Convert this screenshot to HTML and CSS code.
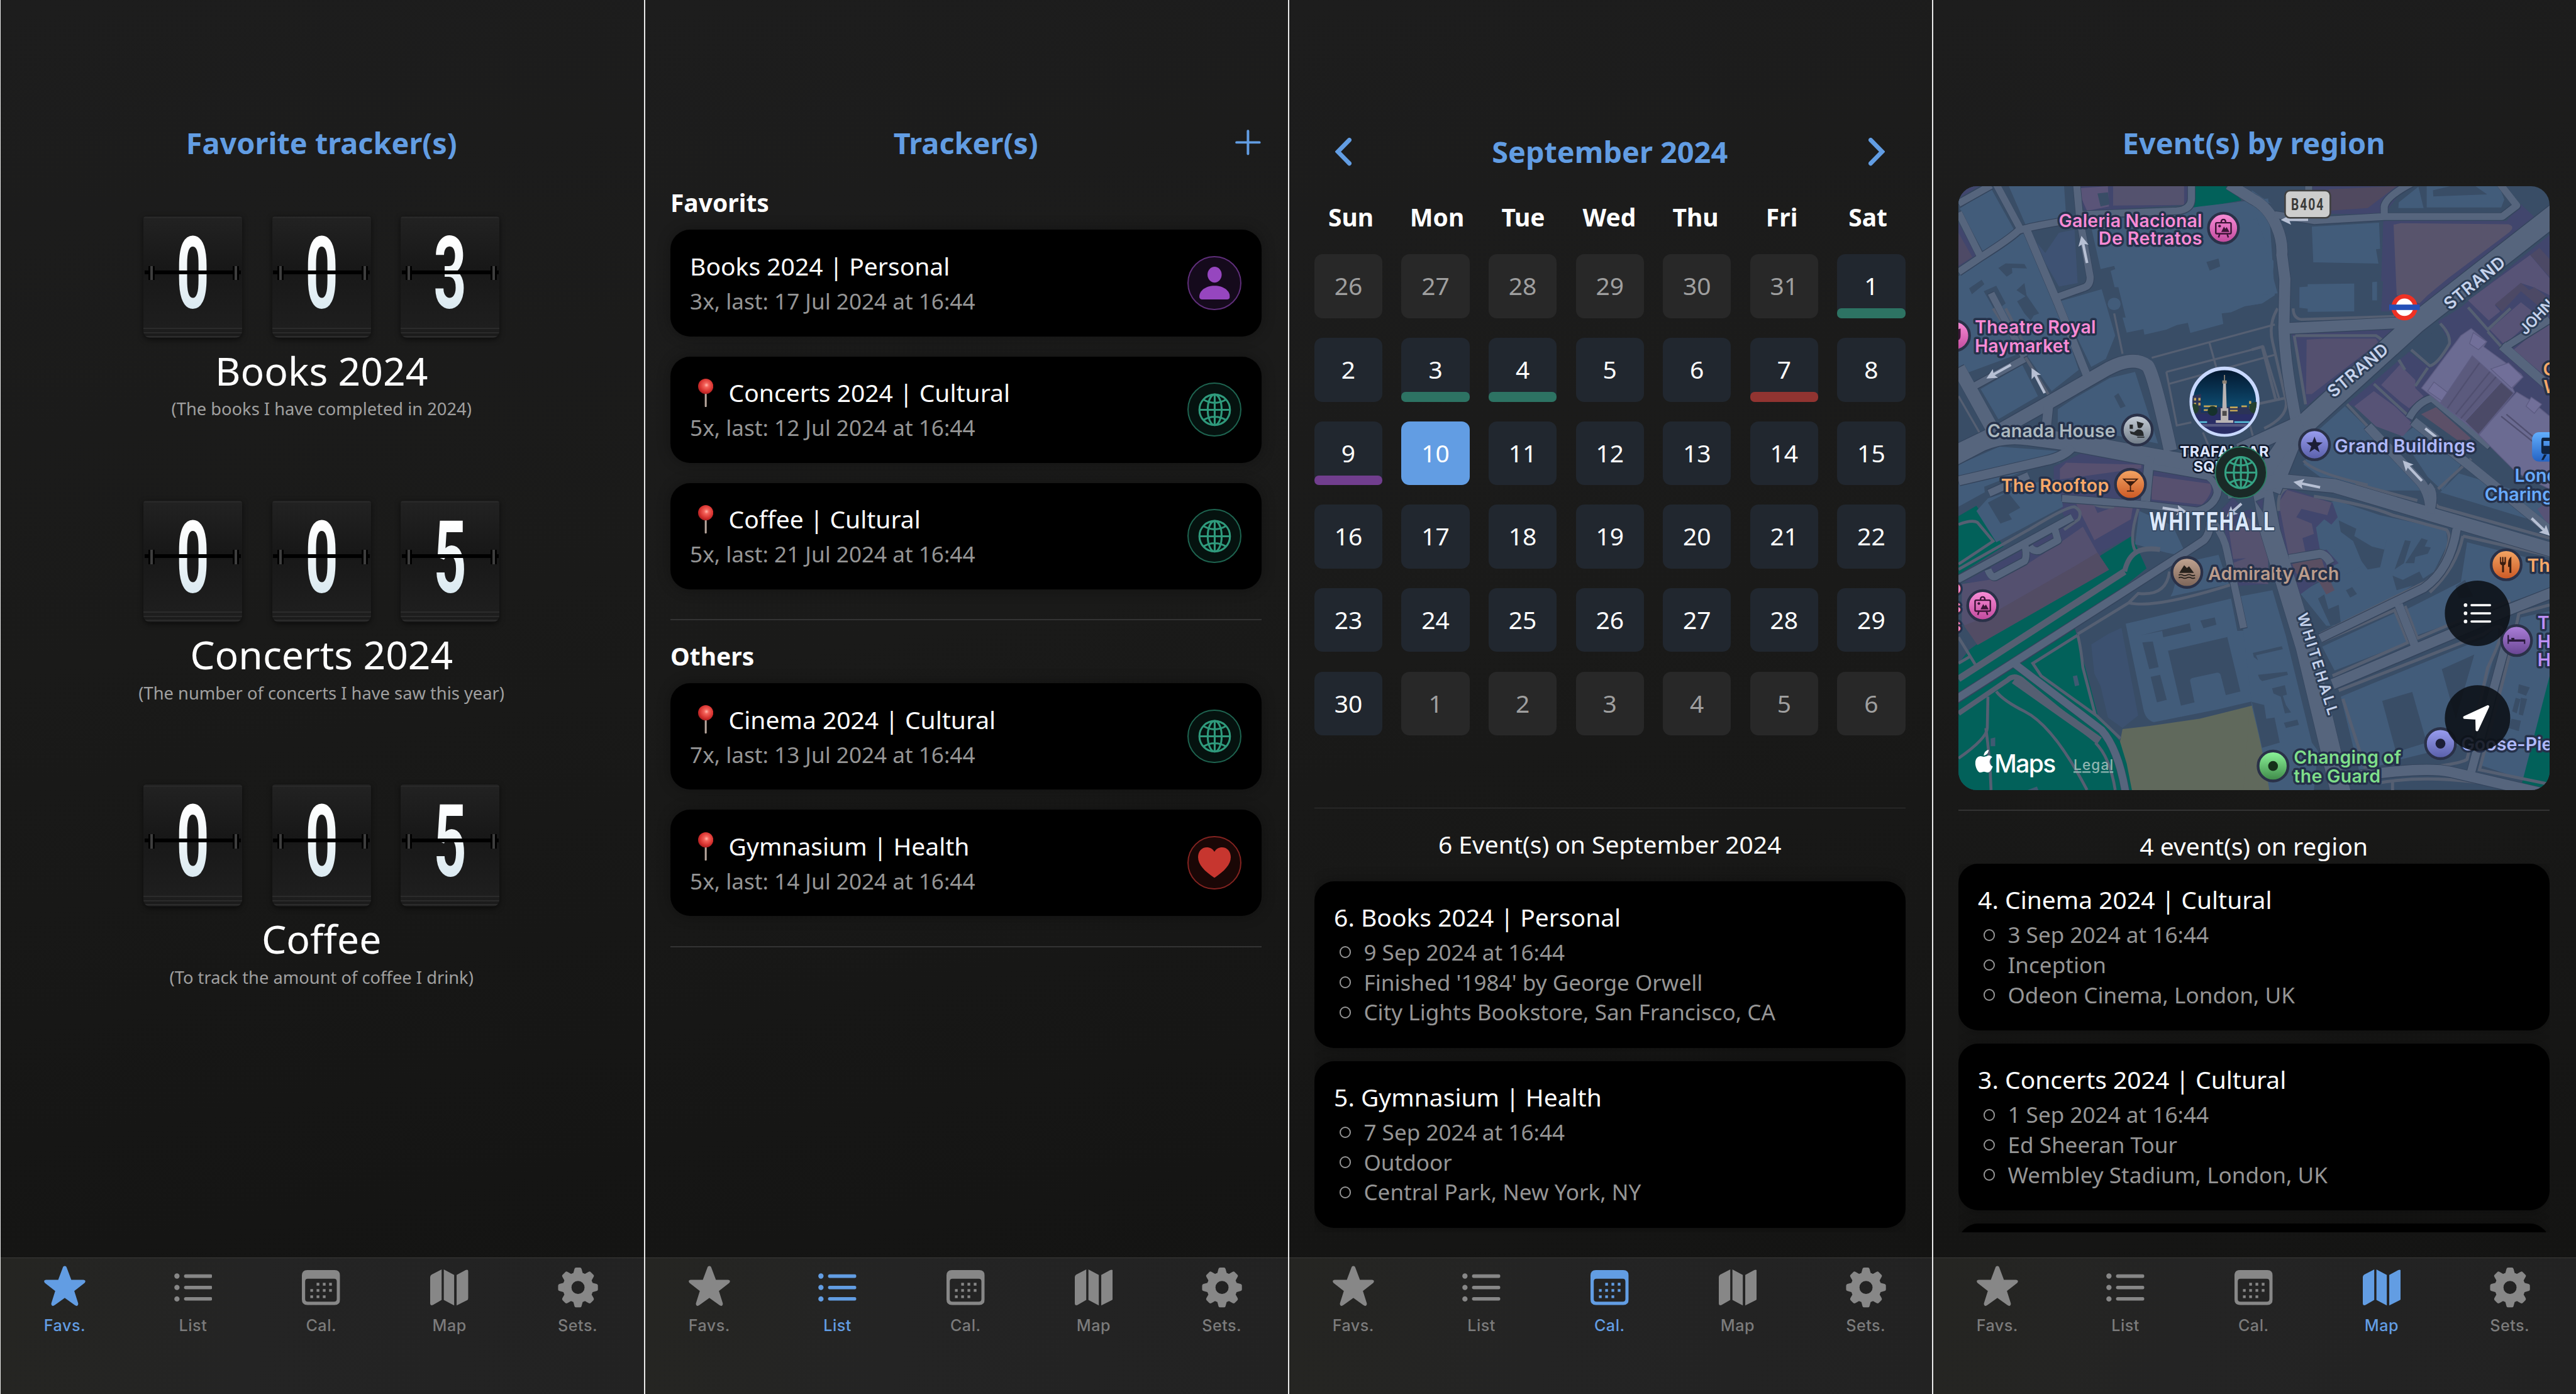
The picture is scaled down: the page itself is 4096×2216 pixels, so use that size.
FILE: index.html
```html
<!DOCTYPE html>
<html lang="en">
<head>
<meta charset="utf-8">
<title>Trackers</title>
<link rel="stylesheet" href="styles.css">
</head>
<body>
<svg class="sprite" aria-hidden="true">
  <defs>
    <radialGradient id="pinball" cx=".55" cy=".42" r=".6"><stop offset="0" stop-color="#ffb9ad"/><stop offset=".25" stop-color="#f4625a"/><stop offset=".7" stop-color="#d6322f"/><stop offset="1" stop-color="#a81d20"/></radialGradient>
    <linearGradient id="pinstem"><stop offset="0" stop-color="#6f625c"/><stop offset=".5" stop-color="#d3c3b8"/><stop offset="1" stop-color="#7d6c63"/></linearGradient>
  </defs>
  <symbol id="i-star" viewBox="0 0 76 74"><path d="M38 0c2 0 3 1 4 4l8 21.500h22c4 0 5 3 2 6L55.500 46l7 22c1 4-2 7-6 4L38 58.500 19.500 72c-4 3-7 0-6-4l7-22L2 31.500c-3-3-2-6 2-6h22L34 4c1-3 2-4 4-4z"/></symbol>
  <symbol id="i-list" viewBox="0 0 70 52"><circle cx="5" cy="5" r="4.800"/><circle cx="5" cy="26" r="4.800"/><circle cx="5" cy="47" r="4.800"/><rect x="18" y="2" width="52" height="6.400" rx="3.200"/><rect x="18" y="22.800" width="52" height="6.400" rx="3.200"/><rect x="18" y="43.600" width="52" height="6.400" rx="3.200"/></symbol>
  <symbol id="i-cal" viewBox="0 0 70 64"><path fill-rule="evenodd" d="M10 0h50q10 0 10 10v44q0 10-10 10H10Q0 64 0 54V10Q0 0 10 0zM11 16q-5 0-5 5v32q0 5 5 5h48q5 0 5-5V21q0-5-5-5z"/><path d="M27 23.500h5v5h-5zm11.500 0h5v5h-5zm11.500 0h5v5h-5zM15.500 35h5v5h-5zm11.500 0h5v5h-5zm11.500 0h5v5h-5zm11.500 0h5v5h-5zM15.500 46.500h5v5h-5zm11.500 0h5v5h-5zm11.500 0h5v5h-5z"/></symbol>
  <symbol id="i-map" viewBox="0 0 70 66"><path d="M0 14q0-3 2.500-4.500L21 0v56L5 65q-5 2-5-3zM25 0l19 10v56L25 56zM48.500 10L65 1q5-2 5 3v48q0 3-2.500 4.500L48.500 66z"/></symbol>
  <symbol id="i-gear" viewBox="-37 -37 74 74"><circle r="20" fill="none" stroke="currentColor" stroke-width="16"/><g id="teeth"><path id="t" d="M-9-25l2.500-9q.7-2.500 3-2.500h7q2.300 0 3 2.500l2.500 9z"/><use href="#t" transform="rotate(45)"/><use href="#t" transform="rotate(90)"/><use href="#t" transform="rotate(135)"/><use href="#t" transform="rotate(180)"/><use href="#t" transform="rotate(225)"/><use href="#t" transform="rotate(270)"/><use href="#t" transform="rotate(315)"/></g></symbol>
  <symbol id="i-globe" viewBox="-31 -31 62 62"><g fill="none" stroke="currentColor" stroke-width="3.600"><circle r="28.500"/><ellipse rx="13" ry="28.500"/><path d="M0-28.500v57M-28.500 0h57M-21-19Q0-7 21-19M-21 19Q0 7 21 19"/></g></symbol>
  <symbol id="i-person" viewBox="0 0 56 60"><ellipse cx="28" cy="14.500" rx="13" ry="14.500"/><path d="M6 60q-6 0-6-5C0 44 12 35 28 35s28 9 28 20q0 5-6 5z"/></symbol>
  <symbol id="i-heart" viewBox="0 0 60 56"><path d="M30 56C12 44 0 32 0 18 0 7 7 0 16 0c6 0 11 3 14 8 3-5 8-8 14-8 9 0 16 7 16 18 0 14-12 26-30 38z"/></symbol>
  <symbol id="i-pin" viewBox="0 0 28 52"><rect x="12" y="24" width="4" height="28" rx="1.500" fill="url(#pinstem)"/><circle cx="14" cy="14" r="14" fill="url(#pinball)"/></symbol>
  <symbol id="i-frame" viewBox="-16 -18 32 36"><g fill="none" stroke="#3c1537" stroke-width="2.800"><rect x="-14" y="-10" width="28" height="20" rx="2"/><path d="M-4-11q0-5 4-5t4 5M-7 11l-2 6M7 11l2 6"/></g><circle cx="-7" cy="-4" r="2.500" fill="#3c1537"/><path fill="#3c1537" d="M-4 7L1-3l2.500 4L6-2l5 9z"/></symbol>
</svg>

<main class="board">
  <section class="panel panel-first">
    <div class="content">
      <header class="bar"><h1>Favorite tracker(s)</h1></header>
      <div class="counters">
        <article class="counter">
          <div class="flips"><span class="flip"><b>0</b></span><span class="flip"><b>0</b></span><span class="flip"><b>3</b></span></div>
          <h2>Books 2024</h2><p>(The books I have completed in 2024)</p>
        </article>
        <article class="counter">
          <div class="flips"><span class="flip"><b>0</b></span><span class="flip"><b>0</b></span><span class="flip"><b>5</b></span></div>
          <h2>Concerts 2024</h2><p>(The number of concerts I have saw this year)</p>
        </article>
        <article class="counter">
          <div class="flips"><span class="flip"><b>0</b></span><span class="flip"><b>0</b></span><span class="flip"><b>5</b></span></div>
          <h2>Coffee</h2><p>(To track the amount of coffee I drink)</p>
        </article>
      </div>
    </div>
    <nav class="tabs">
      <a class="tab on"><svg class="ic star"><use href="#i-star"/></svg>Favs.</a>
      <a class="tab"><svg class="ic list"><use href="#i-list"/></svg>List</a>
      <a class="tab"><svg class="ic cal"><use href="#i-cal"/></svg>Cal.</a>
      <a class="tab"><svg class="ic map"><use href="#i-map"/></svg>Map</a>
      <a class="tab"><svg class="ic gear"><use href="#i-gear"/></svg>Sets.</a>
    </nav>
  </section>

  <section class="panel">
    <div class="content">
      <header class="bar"><h1>Tracker(s)</h1><svg class="plus" viewBox="0 0 47 47"><path d="M23.500 2.500v42M2.500 23.500h42"/></svg></header>
      <h3 class="group">Favorits</h3>
      <div class="cards">
        <article class="card"><div><h4>Books 2024 | Personal</h4><p>3x, last: 17 Jul 2024 at 16:44</p></div><span class="badge purple"><svg class="g-person"><use href="#i-person"/></svg></span></article>
        <article class="card"><div><h4><svg class="pin"><use href="#i-pin"/></svg>Concerts 2024 | Cultural</h4><p>5x, last: 12 Jul 2024 at 16:44</p></div><span class="badge green"><svg class="g-globe"><use href="#i-globe"/></svg></span></article>
        <article class="card"><div><h4><svg class="pin"><use href="#i-pin"/></svg>Coffee | Cultural</h4><p>5x, last: 21 Jul 2024 at 16:44</p></div><span class="badge green"><svg class="g-globe"><use href="#i-globe"/></svg></span></article>
      </div>
      <hr class="rule">
      <h3 class="group others">Others</h3>
      <div class="cards">
        <article class="card"><div><h4><svg class="pin"><use href="#i-pin"/></svg>Cinema 2024 | Cultural</h4><p>7x, last: 13 Jul 2024 at 16:44</p></div><span class="badge green"><svg class="g-globe"><use href="#i-globe"/></svg></span></article>
        <article class="card"><div><h4><svg class="pin"><use href="#i-pin"/></svg>Gymnasium | Health</h4><p>5x, last: 14 Jul 2024 at 16:44</p></div><span class="badge red"><svg class="g-heart"><use href="#i-heart"/></svg></span></article>
      </div>
      <hr class="rule">
    </div>
    <nav class="tabs">
      <a class="tab"><svg class="ic star"><use href="#i-star"/></svg>Favs.</a>
      <a class="tab on"><svg class="ic list"><use href="#i-list"/></svg>List</a>
      <a class="tab"><svg class="ic cal"><use href="#i-cal"/></svg>Cal.</a>
      <a class="tab"><svg class="ic map"><use href="#i-map"/></svg>Map</a>
      <a class="tab"><svg class="ic gear"><use href="#i-gear"/></svg>Sets.</a>
    </nav>
  </section>

  <section class="panel">
    <div class="content">
      <header class="bar month"><svg class="chev" viewBox="0 0 30 51"><path d="M26 4L5 25.500 26 47"/></svg><h1>September 2024</h1><svg class="chev" viewBox="0 0 30 51"><path d="M4 4l21 21.500L4 47"/></svg></header>
      <div class="week"><span>Sun</span><span>Mon</span><span>Tue</span><span>Wed</span><span>Thu</span><span>Fri</span><span>Sat</span></div>
      <div class="days">
        <span class="off">26</span><span class="off">27</span><span class="off">28</span><span class="off">29</span><span class="off">30</span><span class="off">31</span><span class="ev green">1</span>
        <span>2</span><span class="ev green">3</span><span class="ev green">4</span><span>5</span><span>6</span><span class="ev red">7</span><span>8</span>
        <span class="ev purple">9</span><span class="today">10</span><span>11</span><span>12</span><span>13</span><span>14</span><span>15</span>
        <span>16</span><span>17</span><span>18</span><span>19</span><span>20</span><span>21</span><span>22</span>
        <span>23</span><span>24</span><span>25</span><span>26</span><span>27</span><span>28</span><span>29</span>
        <span>30</span><span class="off">1</span><span class="off">2</span><span class="off">3</span><span class="off">4</span><span class="off">5</span><span class="off">6</span>
      </div>
      <hr class="rule month-rule">
      <h3 class="count">6 Event(s) on September 2024</h3>
      <div class="events spaced">
        <article class="event"><h4>6. Books 2024 | Personal</h4><ul><li>9 Sep 2024 at 16:44</li><li>Finished '1984' by George Orwell</li><li>City Lights Bookstore, San Francisco, CA</li></ul></article>
        <article class="event"><h4>5. Gymnasium | Health</h4><ul><li>7 Sep 2024 at 16:44</li><li>Outdoor</li><li>Central Park, New York, NY</li></ul></article>
      </div>
    </div>
    <nav class="tabs">
      <a class="tab"><svg class="ic star"><use href="#i-star"/></svg>Favs.</a>
      <a class="tab"><svg class="ic list"><use href="#i-list"/></svg>List</a>
      <a class="tab on"><svg class="ic cal"><use href="#i-cal"/></svg>Cal.</a>
      <a class="tab"><svg class="ic map"><use href="#i-map"/></svg>Map</a>
      <a class="tab"><svg class="ic gear"><use href="#i-gear"/></svg>Sets.</a>
    </nav>
  </section>

  <section class="panel">
    <div class="content">
      <header class="bar"><h1>Event(s) by region</h1></header>
      <svg class="mapview" viewBox="0 0 1084 1107" preserveAspectRatio="none">
        <defs>
          <linearGradient id="gPink" x2="0" y2="1"><stop offset="0" stop-color="#fb8fd8"/><stop offset="1" stop-color="#c0489c"/></linearGradient>
          <linearGradient id="gGrey" x2="0" y2="1"><stop offset="0" stop-color="#c9d1da"/><stop offset="1" stop-color="#6f7a86"/></linearGradient>
          <linearGradient id="gOrange" x2="0" y2="1"><stop offset="0" stop-color="#f5a765"/><stop offset="1" stop-color="#cb5723"/></linearGradient>
          <linearGradient id="gBrown" x2="0" y2="1"><stop offset="0" stop-color="#c3a592"/><stop offset="1" stop-color="#7b6357"/></linearGradient>
          <linearGradient id="gGreen" x2="0" y2="1"><stop offset="0" stop-color="#8ef79b"/><stop offset="1" stop-color="#3d8747"/></linearGradient>
          <linearGradient id="gBlue" x2="0" y2="1"><stop offset="0" stop-color="#9b9ff2"/><stop offset="1" stop-color="#585ea8"/></linearGradient>
          <linearGradient id="gViolet" x2="0" y2="1"><stop offset="0" stop-color="#ad80db"/><stop offset="1" stop-color="#664490"/></linearGradient>
          <linearGradient id="gTrain" x2="0" y2="1"><stop offset="0" stop-color="#62aefd"/><stop offset="1" stop-color="#2463c4"/></linearGradient>
          <linearGradient id="gNight" x2="0" y2="1"><stop offset="0" stop-color="#02152c"/><stop offset=".55" stop-color="#0d486c"/><stop offset=".75" stop-color="#1c2158"/><stop offset="1" stop-color="#1d2a66"/></linearGradient>
          <marker id="head" viewBox="0 0 20 20" refX="6" refY="10" markerWidth="50" markerHeight="50" markerUnits="userSpaceOnUse" orient="auto"><path d="M0 0l20 10L0 20l4-10z" fill="#b7c0d4"/></marker>
          <clipPath id="medal"><circle cx="488" cy="395" r="59"/></clipPath>
          <g id="walks" fill="none">
            <g transform="matrix(.3827 0 0 .3699 -32 -22)">
              <path stroke-width="10" d="M1010 910L1600 745M1080 980L1545 855L1620 1110M1080 980L1130 1245L1200 1230M1090 1040L1600 895M1285 830L1320 960M1255 1280l25 60M1480 1240l20 80M830 690l40 200M84 1100L190 1290"/>
              <path stroke-width="14" d="M160 1040L400 900L520 1100M250 665l150 240M555 665l135 320M310 665l100 200"/>
            </g>
            <g transform="matrix(.3796 0 0 .3699 538 -22)">
              <path stroke-width="14" d="M200 665Q200 715 240 720L690 705M125 665Q80 740 100 830L165 1120Q180 1200 60 1260M0 870l50-15 65 260M0 1145l160-35M210 800H600Q650 830 640 860M205 800L260 1140M770 870L860 950Q900 940 955 840Q960 790 910 740M1045 660L1140 770L1250 665M710 920l30 50M590 1040L760 1200M850 960l-60 90M460 1140L560 1250M250 1420Q300 1480 560 1540M1140 780l70 80M1060 1410l-160 150"/>
            </g>
            <g transform="matrix(.3827 0 0 .3827 -32 538)">
              <path stroke-width="32" d="M84 955L880 440"/>
              <path stroke-width="24" d="M880 440Q895 370 940 345Q980 325 1050 335M84 1120L320 960Q350 930 390 960L750 1255"/>
              <path stroke-width="14" d="M84 215Q150 190 175 205L250 295L84 405M84 430L420 240Q600 130 640 130Q680 150 660 190L590 240M84 1335Q220 1240 222 1190L225 1040M215 1190Q235 1330 240 1487M265 1015Q300 1060 400 1110Q540 1180 700 1487M740 1260Q810 1330 835 1487M655 745L440 880L480 940L745 1130L860 1240M655 745Q670 800 680 900L740 1130M655 740L900 590Q1020 620 1385 505M900 590L945 545Q1080 560 1095 440M84 880l60-35M84 755l80 130M945 140Q900 280 930 340M700 90Q740 140 830 130"/>
              <path stroke-width="36" d="M350 960L760 1250"/>
            </g>
            <g transform="matrix(.3796 0 0 .3827 538 538)">
              <path stroke-width="15" d="M170 40Q120 60 130 150M300 80Q560 120 680 170L940 240Q960 260 950 310Q920 430 840 490L330 740M340 775L690 625L755 780L390 940M740 605L800 760Q1180 600 1250 580M1020 270L1439 365M1020 270Q990 420 860 540M420 1010L1120 740Q1200 680 1210 720Q1200 780 1140 900L1040 1340Q1000 1370 640 1400M440 1050L560 1420M1439 600L1290 640Q1260 800 1100 1390L1439 1460M880 40Q860 100 900 130L1439 280M500 20L800 100M680 1440V1487M600 1455Q900 1400 1300 1487"/>
            </g>
          </g>
          <g id="roads" fill="none" stroke-linejoin="round">
            <g transform="matrix(.3827 0 0 .3699 -32 -22)">
              <path stroke-width="34" d="M84 145L240 55M84 190L190 410M265 50L385 280M84 485L200 405Q330 320 370 280Q400 265 570 235M240 590L400 905M160 1050L400 915"/>
              <path stroke-width="34" d="M650 50L665 220L715 510Q715 550 690 560L550 612M680 200L1130 182Q1200 175 1200 120V50"/>
              <path stroke-width="38" d="M412 280L560 640L700 1000"/>
              <path stroke-width="64" d="M84 960L250 1270M60 1380L280 1270L520 1130L790 970Q920 895 990 950Q1020 990 1100 1370"/>
              <path stroke-width="88" d="M60 1400L190 1330Q300 1280 420 1300L640 1330L1000 1400L1400 1470"/>
              <path stroke-width="45" d="M515 1150L500 1300M84 1520L500 1420Q590 1400 630 1350M1000 1400L980 1620"/>
              <path stroke-width="30" d="M1010 1450L1280 1500Q1330 1540 1320 1600"/>
            </g>
            <g transform="matrix(.3796 0 0 .3699 538 -22)">
              <path stroke-width="54" d="M-110 50L0 120Q80 160 120 260Q150 330 145 400L160 520L155 760Q160 950 220 1250M150 765L740 735"/>
              <path stroke-width="100" d="M1500 170L790 740L200 1290L90 1568"/>
              <path stroke-width="72" d="M240 1230L-60 1370M200 1270L60 1480"/>
              <path stroke-width="34" d="M110 200L300 230L640 210H1210L1280 155L1200 50M640 210V160Q650 110 770 45M1439 720L1220 860M760 1210Q800 1130 870 1110L1150 1350M275 50V80"/>
              <path stroke-width="46" d="M1210 850L1500 1110M780 1225L1060 1450L1480 1800M560 1250L800 1510Q870 1580 860 1700"/>
            </g>
            <g transform="matrix(.3827 0 0 .3827 -32 538)">
              <path stroke-width="36" d="M60 1060L740 625L1200 330L1260 290Q1290 260 1290 200M350 880L770 1200Q850 1290 885 1500"/>
              <path stroke-width="34" d="M60 490L630 180M225 430Q240 470 260 465L400 390Q415 370 400 300M425 320Q440 345 470 340L560 290L545 235M1310 210Q1360 280 1370 340L1450 710M230 65L420 -20M580 90L980 120L1230 150Q1340 120 1330 0"/>
            </g>
            <g transform="matrix(.3796 0 0 .3827 538 538)">
              <path stroke-width="96" d="M50 40L90 250L260 800L430 1500"/>
              <path stroke-width="66" d="M-120 60L130 5L400 30L860 165L1480 345"/>
              <path stroke-width="40" d="M990 235Q960 430 830 520L330 760M710 600L790 800M860 160Q890 60 850 30M1240 740L1060 1400M180 380L330 355Q360 360 380 400"/>
              <path stroke-width="50" d="M390 980L820 800L1250 620L1480 530M440 1430Q830 1370 960 1400L1480 1520"/>
            </g>
          </g>
        </defs>

        <rect width="1084" height="1107" fill="#394d66"/>
        <g transform="matrix(.3827 0 0 .3699 -32 -22)">
          <g fill="#41466d"><path d="M84 59H185L84 120zM84 240L175 410L84 465zM640 59H1190V150L690 185zM540 1450L700 1370L1000 1420L990 1600H540zM1020 1470L1260 1500L1300 1600H1000z"/></g>
          <path fill="#4e4a66" d="M84 290L150 410L84 455z"/>
          <path fill="#5a5478" d="M652 70L800 59L805 160L700 182z"/><path fill="#54526e" d="M825 59H1165V152L825 155z"/><path fill="#57506f" d="M570 1460L600 1430L960 1440V1600H570z"/>
          <path fill="#02615a" d="M1215 59H1380L1440 130L1208 172z"/>
          <g fill="#425c7a"><path d="M90 170L240 70L350 275L205 390zM325 59H590L600 210L405 250zM84 505L395 290L545 620L660 970L530 1075L400 880L84 1000zM570 630L770 570L835 800L790 915L720 955zM190 1065L390 945L465 1100L275 1215zM560 1165L640 1110L810 1010L930 980L1040 1335L560 1240zM84 1440L280 1350L600 1375L570 1430L400 1470L84 1600z"/>
          <path d="M715 240L1240 160L1568 120L1600 600L1540 640L1455 655L1390 685L1345 690L1353 742L1195 787L1183 737L1130 748L1080 770L975 795L970 768L890 785L870 710H885L850 560H832L813 480L835 470L830 455L765 470z"/></g>
          <path fill="#3e5273" d="M460 340L500 390L565 290L640 275L655 540L565 557L500 440z"/>
          <circle cx="830" cy="643" r="31" fill="#425c7a"/>
          <g fill="#394d66"><path d="M1272 435L1330 418L1338 457L1288 478zM135 565L195 523L208 545L148 595zM275 465L310 442L400 445L412 467L340 465L342 490L315 508zM362 575L400 540L410 600L470 690L445 700L430 725L400 690L365 630L405 605zM205 580L265 553L310 640L260 680zM750 95L800 90L808 150L765 160z"/><path d="M830 1100L850 1085L885 1150L860 1160z"/></g>
        </g>
        <g transform="matrix(.3796 0 0 .3699 538 -22)">
          <g fill="#41466d"><path d="M260 59H740L640 200L260 195zM635 232H1230L1300 150L1390 235L800 680H625L640 415H680V530H625zM190 780L700 770L265 1150zM1010 660L1439 300V1568L1100 1300L870 1110L760 1230L460 1140L760 880L860 960L960 840L900 730z"/></g>
          <g fill="#425c7a"><path d="M0 80L100 150L0 100zM710 140L805 62L830 168H708zM845 59H1195L1220 125L1205 165H845zM290 260L615 240L620 370L600 372L612 443L297 437zM230 560L270 557V545L495 542V680L270 682V667L230 662zM582 535L605 533V625H582z"/><path d="M-10 230L25 220L45 280L75 360L70 395L105 430V460L100 500L125 590L50 600V640L-10 650z"/><path d="M320 1270L450 1150L560 1260L840 1568H420L250 1440z"/><path d="M800 1240L1010 1440L920 1568L850 1500L720 1300z"/></g>
          <path fill="#394d66" d="M875 80L960 59H1080L1137 100L877 110zM780 870L910 750L955 830L860 945z"/>
          <g fill="#58546c"><path d="M685 250L720 243L1240 248Q1280 260 1235 295L1060 430L950 515L850 600L810 640L700 600z"/><path fill="#50495f" d="M370 75L700 59L560 168L380 180z"/><path fill="#54506f" d="M265 820L350 815H600L612 835L290 1090H262z"/></g>
          <g fill="#575376"><path d="M1045 625L1345 400L1439 515V600L1360 560L1300 540L1175 650L1200 680L1145 725zM1150 770L1300 635L1380 700L1220 845zM1265 870L1439 720V1020zM625 1045L715 945L790 1020V1060L830 1100L760 1160L720 1130zM495 1150L590 1075L690 1150L780 1240L730 1300L600 1250z"/></g>
          <path fill="#4c4965" d="M1175 645L1300 538L1340 575L1365 560L1439 620V700L1300 580L1210 680zM1345 400L1390 365L1439 420V510z"/>
          <path fill="#5c5068" d="M818 1190L890 1155L1060 1310L1010 1330z"/>
        </g>
        <g transform="matrix(.3827 0 0 .3827 -32 538)">
          <path fill="#41466d" d="M560 0L1000 -60L985 60L915 270L740 360L800 430L700 440L600 200L540 60zM110 490L640 200L700 240L770 360L700 400L220 500zM1350 180L1490 140L1568 380V500L1400 510zM1000 -20H1310L1320 70L1260 150L990 110z"/>
          <path fill="#02615a" d="M84 175L170 125L300 320L84 455zM135 815L770 360L915 270L985 425L640 705L755 1140L900 1300L920 1487H84V880z"/>
          <path fill="#394d66" d="M84 680L135 815L84 880z"/>
          <g fill="#425c7a"><path d="M170 150L225 90L500 0H560L585 130L265 300zM84 0L200 -40L210 60L84 130zM950 150L1110 220L1180 370L1080 350L930 310zM1110 540L1150 400L1330 360L1350 420L1380 500L1100 560zM885 690L950 675L1390 570L1420 725L1520 720L1568 800V900L1520 940L1568 960V1050L1500 1060L1330 1100L1020 1162Q980 1150 970 1100z"/></g>
          <path fill="#3c5170" d="M720 790L800 740L865 710L945 1130L870 1190L800 1140L765 990L735 930z"/>
          <path fill="#02615a" d="M430 900L655 760L740 1120L600 1030zM84 880L145 850L160 890L84 940z"/>
          <path fill="#57506f" d="M640 100L720 90L750 160L830 130L930 60L910 190L735 290zM1005 -20L1290 20Q1310 60 1250 120L1010 95z"/>
          <path fill="#54506f" d="M100 500L230 480L420 400L560 310L680 225L750 350L805 432L175 792L100 680z"/>
          <path fill="#524c64" d="M230 650L640 415L750 350L805 432L175 792L110 700z"/>
          <path fill="#55526f" d="M1380 240L1470 180L1568 260V370L1400 380zM1395 400L1568 340V500L1420 490z"/>
          <g fill="#394d66"><path d="M225 110L320 60L380 135L325 165L340 190L285 210zM960 745L1060 725L1065 755L1200 725L1192 688L1060 720zM965 780L1015 775L1043 898L998 908zM1005 945L1050 935L1082 1055L1035 1067zM1243 675L1312 660L1320 695L1258 712zM1088 820L1372 754L1435 1015L1365 1032L1340 935Q1335 922 1320 925L1205 950Q1190 955 1195 970L1215 1067L1150 1083z"/></g>
          <path fill="#60695c" d="M870 1195L1000 1180L1240 1145L1490 1083L1515 1180L1545 1310L1600 1400V1487H915L890 1360L858 1255z"/>
          <path fill="#3f5a72" d="M238 1240L260 1235V1277H238zM632 942L652 937L663 985L642 990zM415 1487L460 1470L467 1487z"/>
        </g>
        <g transform="matrix(.3796 0 0 .3827 538 538)">
          <path fill="#425c7a" d="M-60 560L100 530L165 750L290 1260L320 1300L300 1487H80L0 1080z"/>
          <path fill="#394d66" d="M5 830L145 798L150 812L20 842L30 865L10 850zM30 935L170 920L175 935L50 965L38 955zM98 1000L160 985L170 1030L150 1035L165 1080L190 1115L160 1120L140 1040L105 1025zM155 1165L220 1150L228 1175L165 1190zM0 1065L60 1080L70 1145L110 1140L135 1260L50 1285z"/>
          <path fill="#60695c" d="M-10 1090L0 1090Q45 1250 85 1487H-40z"/>
          <path fill="#425c7a" d="M370 110L410 100L620 170L940 240L945 310L880 440L720 545L440 700L360 700L230 540L330 490L250 300z"/>
          <path fill="#41466d" d="M130 90L170 40L390 110L415 180L320 290L420 400L380 420L330 480L220 560L130 200z"/>
          <path fill="#55526f" d="M130 110L170 50L385 110L365 170L240 140L215 180L290 210L300 260L245 280L260 350L180 370z"/>
          <path fill="#5a4f62" d="M195 405L335 370L350 420L400 530L360 550L325 490L215 450z"/>
          <path fill="#425c7a" d="M310 230L350 190L500 300L540 410L440 460L400 330L330 340z"/>
          <g fill="#394d66"><path d="M420 195L505 235L495 270L580 320L640 335L655 275L620 420L560 430L530 390L490 295L430 250zM740 290L768 295L735 400L690 430zM820 280L850 290L835 320L865 325L850 355L790 370L785 400L742 400zM455 530L485 515L508 548L475 565zM320 570L350 550L370 620L420 600L430 690L380 700zM680 460L730 480L810 440L835 490L700 530z"/></g>
          <g fill="#425c7a"><path d="M340 800L690 640L750 780L400 915zM750 620L1010 490L1040 300L1439 400V520L800 745zM910 60L1439 220V100L1000 -30zM430 1040L600 970L1120 760L1190 700L1190 780L1050 1260L700 1345L520 1400zM1300 660L1439 630V960L1320 1440L1110 1370z"/></g>
          <g fill="#394d66"><path d="M630 1060L775 1017L845 1260L697 1305zM918 908L1075 838L985 1145zM1290 980L1343 995L1325 1035L1285 1020zM1275 1045L1298 1052L1280 1120L1258 1110zM1300 1045L1330 1050L1310 1130L1290 1125zM1255 1145L1300 1155L1290 1205L1240 1190zM985 510L1030 480L1070 560L1000 570z"/></g>
          <path fill="#575376" d="M1380 140L1439 100V230z"/>
          <path fill="#02615a" d="M1439 940V1487L1305 1455z"/>
        </g>

        <use href="#walks" stroke="#555f72"/>
        <use href="#roads" stroke="#34445c" transform="translate(-1 -1)"/>
        <use href="#roads" stroke="#34445c" transform="translate(1 1.500)"/>
        <use href="#roads" stroke="#56657d"/>
        <g transform="matrix(.3796 0 0 .3699 538 -22)" stroke="#5d5c82" stroke-width="4"><path fill="#6b6b92" d="M1060 765L1135 830L1120 855L1300 990L1310 1005L1260 1060L1270 1080L1100 1290L820 1060L1010 800zM1280 1080L1345 1120L1439 1200V1560L1280 1480L1095 1290z"/><path fill="#716f99" d="M1070 785L1135 830L1095 870L1052 840zM880 1030L950 1085L920 1125L850 1075zM1240 935L1310 1005L1255 1060L1155 965zM1350 1105L1400 1140L1365 1185L1325 1150z"/><path fill="#5b5a7d" d="M1065 900L1205 1030L1030 1225L910 1135z"/><path fill="#4b4a67" d="M1205 1030L1265 1085L1095 1290L1030 1225z"/><path fill="none" stroke="#504f70" stroke-width="7" d="M1100 935L945 1160M1150 980L985 1190M1180 1005L1010 1210M1205 1200L1400 1360M1230 1190L1439 1370"/></g>
        <path fill="#41466d" stroke="#3a4a66" stroke-width="2" d="M482 592l22-22 14 16-24 20zM546 578l14-6-2 24z"/>

        <g stroke="#b7c0d4" stroke-width="13">
          <g transform="matrix(.3827 0 0 .3699 -32 -22)"><path marker-end="url(#head)" d="M700 440L680 340"/><path marker-end="url(#head)" d="M335 945L248 995"/><path marker-end="url(#head)" d="M497 1085L450 992"/></g>
          <g transform="matrix(.3796 0 0 .3699 538 -22)"><path marker-end="url(#head)" d="M272 225L175 226"/><path d="M838 1260L890 1302"/><path marker-end="url(#head)" d="M822 1520L753 1445"/><path marker-end="url(#head)" d="M330 1552L235 1532"/></g>
          <g transform="matrix(.3827 0 0 .3827 -32 538)"><path marker-end="url(#head)" d="M1062 135L1145 149"/><path marker-end="url(#head)" d="M1440 115L1395 155"/></g>
          <g transform="matrix(.3796 0 0 .3827 538 538)"><path marker-end="url(#head)" d="M1352 185L1415 245"/></g>
        </g>

        <g class="poi">
          <circle cx="486" cy="77" r="27.500" fill="url(#gPink)"/><use href="#i-frame" x="470" y="59" width="32" height="36"/>
          <circle cx="-7" cy="274" r="27.500" fill="url(#gPink)"/><path d="M0 262l4-1v12q0 8-4 9z" fill="#3c1537"/>
          <circle cx="328" cy="447" r="27.500" fill="url(#gGrey)"/><path fill="#26292b" d="M314 437h6v8h-6zM327 431l13 4-3 6q-2 4-8 2zM328 446q12-2 12 12h-12l-12-4-2-5 8 2zM328 459h13v2h-13z"/>
          <circle cx="315.500" cy="546.500" r="27.500" fill="url(#gOrange)"/><path fill="none" stroke="#3b1c0f" stroke-width="2" d="M303 537h25l-12.500 12zM315.500 549v9M309 559h13"/><path fill="#3b1c0f" d="M307 541h17l-8.500 8z"/>
          <circle cx="419" cy="708" r="27.500" fill="url(#gBrown)"/><path fill="#26201b" d="M405 709l9-14 5 5 4-3 9 12z"/><path fill="none" stroke="#26201b" stroke-width="2" d="M404 713q4-2 7.500 0t7.500 0 7.500 0 7.500 0M404 718q4-2 7.500 0t7.500 0 7.500 0 7.500 0"/>
          <circle cx="44.500" cy="769" r="27.500" fill="url(#gPink)"/><use href="#i-frame" x="28.500" y="751" width="32" height="36"/>
          <circle cx="577" cy="1063" r="27.500" fill="url(#gGreen)"/><circle class="dot" cx="577" cy="1063" r="9" fill="#15301a"/>
          <circle cx="653" cy="474" r="27.500" fill="url(#gBlue)"/><path fill="#1c1e37" d="M653 459l4 10.500 11 .5-9 7 3.300 11-9.300-6.500-9.300 6.500 3.300-11-9-7 11-.5z"/>
          <circle cx="1004.500" cy="694" r="27.500" fill="url(#gOrange)"/><path fill="#3b1c0f" d="M993 680h2v9h2v-9h2.500v9h2v-9h2.500v10q0 4-3.500 5v13h-3.500v-13q-4-1-4-5zM1014 679v30h-3.500v-11h-2.500q-1-15 6-19z"/>
          <circle cx="884" cy="1022" r="27.500" fill="url(#gBlue)"/><circle class="dot" cx="884" cy="1022" r="9" fill="#1c1e37"/>
          <circle cx="1023.500" cy="833" r="27.500" fill="url(#gViolet)"/><path fill="#291a3c" d="M1007 823h2.500v8h5l-1-3h6v3h20v8h-2.500v-4h-27.500v4h-2.500z"/>
          <rect x="1052" y="451" width="60" height="54" rx="13" fill="url(#gTrain)"/><path fill="#0f2340" fill-rule="evenodd" d="M1072 461h30v30h-28q-5 0-5-5v-19q0-6 3-6zM1073 467v9h30v-9zM1074 492h5l-6 10h-4z"/>
        </g>

        <g class="label">
          <g fill="#fa8bd6"><text x="184" y="75" textLength="263">Galeria Nacional</text><text x="257" y="107.500" textLength="190">De Retratos</text><text x="30" y="270" textLength="222">Theatre Royal</text><text x="30" y="304" textLength="174">Haymarket</text><text x="5" y="747" text-anchor="end">o</text><text x="5" y="782" text-anchor="end">s</text><text x="5" y="817" text-anchor="end">s</text></g>
          <text x="53" y="460" textLength="235" fill="#aebac0">Canada House</text>
          <g fill="#f8a868"><text x="78" y="560" textLength="198">The Rooftop</text><text x="1072" y="347">C</text><text x="1073" y="380">W</text><text x="1043" y="706.500">Th</text></g>
          <text x="458" y="721.500" textLength="240" fill="#bb9c8b">Admiralty Arch</text>
          <g fill="#7fdf8a"><text x="615" y="1058.500" textLength="197">Changing of</text><text x="615" y="1093.500" textLength="159">the Guard</text></g>
          <g fill="#b0b9fb"><text x="690" y="487.500" textLength="258">Grand Buildings</text><text x="922" y="1034.500">Goose-Pie</text></g>
          <g fill="#68abff"><text x="1020" y="542">Lond</text><text x="965" y="577">Charing</text></g>
          <g fill="#bd8ff5"><text x="1062" y="811.500">T</text><text x="1062" y="846">H</text><text x="1062" y="880.500">H</text></g>
        </g>
        <g class="street">
          <text transform="translate(688 389) rotate(-40)" textLength="134">STRAND</text>
          <text transform="translate(901 228) rotate(-39)" textLength="134">STRAND</text>
          <text transform="translate(1040 274) rotate(-46)" font-size="27">JOHN</text>
          <text transform="translate(621 786) rotate(72.700)" textLength="194" font-size="27">WHITEHALL</text>
        </g>
        <g class="place"><text x="406" y="496.500" textLength="163">TRAFALGAR</text><text x="431" y="524" textLength="114">SQUARE</text></g>
        <text class="district" transform="translate(350 631) scale(.8 1)" textLength="287">WHITEHALL</text>

        <rect x="599" y="8" width="83" height="50" rx="9" fill="#cdcdcd" stroke="#404040" stroke-width="3"/>
        <text class="shield" transform="translate(610 43.500) scale(.74 1)" textLength="80">B404</text>
        <circle cx="818" cy="222" r="20" fill="#fff" stroke="#ee3124" stroke-width="8"/><rect x="790" y="217" width="56" height="10" fill="#2450b8"/>

        <circle cx="488" cy="395" r="61" fill="url(#gNight)" stroke="#c8d8ff" stroke-width="6.500"/>
        <g clip-path="url(#medal)">
          <path fill="#2b3357" d="M425 385l20-4v34h30v-10h60v-6l20-6v50H425z"/>
          <path fill="#c2a557" d="M432 388h4v5h-4zm8 0h4v5h-4zm-8 9h4v5h-4zm8 0h4v5h-4zM450 402h24v3h-24zm0 7h24v3h-24zM498 404h14v3h-14zm0 6h14v3h-14zM519 402h10v3h-10zM533 394h4v5h-4zm0 9h4v5h-4z"/>
          <path fill="#2a2e66" d="M425 418h130v40H425z"/><path fill="#59c5df" d="M430 431h26v3h-26zM506 431h40v3h-40z"/><path fill="#565a83" d="M425 436h130v5H425z"/>
          <circle cx="466" cy="412" r="9" fill="#16312d"/><circle cx="432" cy="408" r="9" fill="#23402f"/><circle cx="543" cy="406" r="10" fill="#23402f"/>
          <path fill="#b9b4b4" d="M485.500 361h5l1.500 46h-8zM481 407h14v22h-14zM472 429h32v5h-32z"/><path fill="#8f8375" d="M484 356h8v6h-8zM487 346h2v10h-2z"/><path fill="#4c4a4c" d="M484 412h8v9h-8z"/>
        </g>
        <circle cx="518" cy="525" r="47" fill="#1a2a27" stroke="#2b8065" stroke-width="2"/><use href="#i-globe" x="487" y="494" width="62" height="62" color="#35a384"/>

        <g fill="#fff"><path d="M47 1046c4 0 7-3 10-2 2 0 4 1 5 3-7 4-6 14 1 17-2 6-6 11-9 11s-4-1.500-7-1.500-4 1.500-7 1.500c-4 0-9-9-9-17 0-9 5-13 10-13 2 0 4 1.500 6 1zM46.500 1044c0-5 4-10 9-10.500 0 5-4 10-9 10.500z"/><text class="brand" x="66" y="1074.500" textLength="113">Maps</text></g>
        <text class="legal" x="211" y="1070.500" textLength="73">Legal</text>

        <g class="mapbtn"><circle cx="952" cy="783" r="60"/><circle cx="952" cy="975" r="60"/></g>
        <g fill="#fff" transform="translate(926 765)"><circle cx="4" cy="3" r="3.300"/><circle cx="4" cy="18" r="3.300"/><circle cx="4" cy="33" r="3.300"/><rect x="13" y="1" width="38" height="4" rx="2"/><rect x="13" y="16" width="38" height="4" rx="2"/><rect x="13" y="31" width="38" height="4" rx="2"/></g>
        <path fill="#fff" stroke="#fff" stroke-width="5" stroke-linejoin="round" d="M971 954l-43 20 22.500 1.500L951 997z"/>
      </svg>
      <hr class="rule map-rule">
      <h3 class="count">4 event(s) on region</h3>
      <div class="events">
        <article class="event"><h4>4. Cinema 2024 | Cultural</h4><ul><li>3 Sep 2024 at 16:44</li><li>Inception</li><li>Odeon Cinema, London, UK</li></ul></article>
        <article class="event"><h4>3. Concerts 2024 | Cultural</h4><ul><li>1 Sep 2024 at 16:44</li><li>Ed Sheeran Tour</li><li>Wembley Stadium, London, UK</li></ul></article>
        <article class="event"></article>
      </div>
    </div>
    <nav class="tabs">
      <a class="tab"><svg class="ic star"><use href="#i-star"/></svg>Favs.</a>
      <a class="tab"><svg class="ic list"><use href="#i-list"/></svg>List</a>
      <a class="tab"><svg class="ic cal"><use href="#i-cal"/></svg>Cal.</a>
      <a class="tab on"><svg class="ic map"><use href="#i-map"/></svg>Map</a>
      <a class="tab"><svg class="ic gear"><use href="#i-gear"/></svg>Sets.</a>
    </nav>
  </section>
</main>
</body>
</html>
```
FILE: styles.css
```css
/* 1rem = 10 design pixels */
html { font-size: 8.6706px; }
* { box-sizing: border-box; margin: 0; padding: 0; }
body { background: #1a1a1a; color: #fff; font-family: "Noto Sans", sans-serif; overflow: hidden; }
.sprite { position: absolute; width: 0; height: 0; }

.board { display: grid; grid-template-columns: repeat(4, 1fr); width: 100vw; height: 100vh; }
.panel { display: flex; flex-direction: column; height: 100vh; min-width: 0; border-left: 2px solid #e9e9e9; background: linear-gradient(170deg, #1d1d1d 0%, #1a1a19 45%, #141413 92%); }
.panel-first { border-left-width: 1px; }
.content { flex: 1; min-height: 0; padding: 22.45rem 4.9rem 0 4.6rem; overflow: hidden; display: flex; flex-direction: column; }

.bar { position: relative; display: flex; justify-content: center; align-items: center; height: 7.4rem; flex: none; }
.bar h1 { font-size: 5.4rem; line-height: 7.4rem; font-weight: 700; color: #629de3; }
.plus { position: absolute; right: .1rem; top: 1.35rem; width: 4.7rem; height: 4.7rem; fill: none; stroke: #629de3; stroke-width: 4.6; stroke-linecap: round; }

/* flip counters */
.counters { margin-top: 9.8rem; display: flex; flex-direction: column; }
.counter { height: 52.1rem; display: flex; flex-direction: column; align-items: center; }
.flips { display: flex; gap: 5.5rem; }
.flip { position: relative; width: 18.1rem; height: 22.3rem; border-radius: .5rem .5rem 1.2rem 1.2rem; text-align: center;
  background:
    linear-gradient(#2a2a2a, #2a2a2a) 0 .2rem / 100% .2rem no-repeat,
    linear-gradient(#2b2b2b, #2b2b2b) 0 20.4rem / 100% .25rem no-repeat,
    linear-gradient(#2b2b2b, #2b2b2b) 0 21.2rem / 100% .25rem no-repeat,
    linear-gradient(#2b2b2b, #2b2b2b) 0 21.9rem / 100% .3rem no-repeat,
    linear-gradient(#222 0, #171717 45%, #191919 50%, #1e1e1e 92%, #191919 100%);
  box-shadow: 0 .3rem 1rem rgba(0, 0, 0, .55); }
.flip b { display: block; font: 700 18.4rem/21.1rem Roboto, sans-serif; transform: scaleX(.57); color: transparent; background: linear-gradient(#fff 20%, #f1f6f8 45%, #dbeaf1 80%); -webkit-background-clip: text; background-clip: text; }
.flip::before { content: ""; position: absolute; left: .2rem; right: .2rem; top: 9.9rem; height: .7rem; background: #000; z-index: 1; }
.flip::after { content: ""; position: absolute; left: .9rem; right: .5rem; top: 9.1rem; height: 2.6rem; z-index: 2;
  background:
    linear-gradient(90deg, #000 .4rem, #3e3e3e .4rem, #3e3e3e .75rem, #000 .75rem) 0 0 / 1.2rem 100% no-repeat,
    linear-gradient(90deg, #000 .4rem, #3e3e3e .4rem, #3e3e3e .75rem, #000 .75rem) 100% 0 / 1.2rem 100% no-repeat; }
.counter h2 { margin-top: 1.1rem; font-size: 7.2rem; line-height: 9.8rem; font-weight: 400; }
.counter p { margin-top: .1rem; font-size: 3.15rem; line-height: 4.2rem; color: #a0a0a0; }

/* tracker list */
.group { margin-top: 4.3rem; font-size: 4.5rem; line-height: 6.1rem; font-weight: 700; flex: none; }
.group.others { margin-top: 3.5rem; }
.cards { margin-top: 1.9rem; display: flex; flex-direction: column; gap: 3.7rem; }
.card { display: flex; justify-content: space-between; align-items: center; height: 19.5rem; padding: 0 3.6rem; border-radius: 3.6rem; background: #000; box-shadow: 0 0 2.4rem rgba(0, 0, 0, .3); }
.card h4 { display: flex; align-items: center; font-size: 4.5rem; line-height: 6.1rem; font-weight: 400; }
.card p { margin-top: .6rem; font-size: 4.05rem; line-height: 5.5rem; color: #959595; }
.pin { width: 2.8rem; height: 5.2rem; margin: 0 2.8rem 0 1.5rem; }
.badge { display: flex; justify-content: center; align-items: center; width: 9.9rem; height: 9.9rem; border-radius: 50%; border: .28rem solid; }
.badge svg { fill: currentColor; color: inherit; overflow: visible; }
.badge.purple { background: #150a1c; border-color: #5f2e7a; color: #9646bf; }
.badge.green { background: #05120f; border-color: #1e6450; color: #2f9a7c; }
.badge.red { background: #1a0706; border-color: #832320; color: #c7362f; }
.g-person { width: 5.6rem; height: 6rem; }
.g-globe { width: 6.1rem; height: 6.1rem; }
.g-heart { width: 6rem; height: 5.6rem; }
.rule { flex: none; margin-top: 5.5rem; height: .2rem; border: 0; background: #333; }

/* calendar */
.month { margin-top: 1.7rem; justify-content: space-between; padding: 0 3.8rem; }
.chev { width: 3rem; height: 5.1rem; fill: none; stroke: #629de3; stroke-width: 8; stroke-linecap: round; stroke-linejoin: miter; }
.week { display: grid; grid-template-columns: repeat(7, minmax(0, 1fr)); margin: 5.3rem -1.05rem 0 -1.2rem; font-size: 4.5rem; line-height: 6.1rem; font-weight: 700; }
.week span { display: flex; justify-content: center; white-space: nowrap; }
.days { display: grid; grid-template-columns: repeat(7, minmax(0, 1fr)); grid-auto-rows: 11.7rem; gap: 3.6rem 3.5rem; margin-top: 3.7rem; font-size: 4.5rem; line-height: 11.6rem; text-align: center; }
.days span { position: relative; border-radius: 1.5rem; background: #21272f; }
.days .off { background: #282828; color: #9f9f9f; }
.days .today { background: #629de3; }
.ev::after { content: ""; position: absolute; left: 0; right: 0; bottom: 0; height: 1.8rem; border-radius: .8rem; background: currentColor; }
.ev.green::after { background: #2d7363; }
.ev.red::after { background: #913431; }
.ev.purple::after { background: #713e8e; }
.month-rule { margin-top: 13.2rem; }
.map-rule { margin-top: 3.6rem; }
.count { flex: none; margin-top: 3.5rem; font-size: 4.5rem; line-height: 6.1rem; font-weight: 400; text-align: center; }
.events { display: flex; flex-direction: column; gap: 2.4rem; flex: 1; min-height: 0; overflow: hidden; margin-bottom: 4.7rem; border-top: .1rem solid transparent; }
.events.spaced { padding-top: 3.6rem; }
.event { flex: none; height: 30.6rem; padding: 3.6rem 3.6rem; border-radius: 3.6rem; background: #000; box-shadow: 0 0 2.4rem rgba(0, 0, 0, .3); }
.event h4 { font-size: 4.5rem; line-height: 6.1rem; font-weight: 400; }
.event ul { list-style: none; margin-top: .6rem; }
.event li { display: flex; align-items: center; gap: 2.3rem; padding-left: 1rem; font-size: 4.05rem; line-height: 5.5rem; color: #959595; }
.event li::before { content: ""; width: 1.7rem; height: 1.7rem; border: .26rem solid #959595; border-radius: 50%; }

/* map */
.mapview { flex: none; margin-top: 4.3rem; width: 108.4rem; height: 110.7rem; border-radius: 3.4rem; overflow: hidden; }
.poi > circle:not(.dot) { stroke: #2a3148; stroke-width: 5; }
.label, .street, .place, .district { paint-order: stroke; stroke-linejoin: round; }
.label { font: 600 33px Inter, sans-serif; stroke: #25314a; stroke-width: 8px; }
.street { font-family: Inter, sans-serif; font-size: 31px; font-weight: 600; fill: #c6d3ec; stroke: #2d3e56; stroke-width: 7px; }
.place { font: 700 27px Inter, sans-serif; fill: #dde6ff; stroke: #10182c; stroke-width: 6px; }
.district { font: 700 47px Roboto, sans-serif; fill: #dbe8fa; stroke: #33455f; stroke-width: 4px; }
.shield { font: 700 30px Roboto, sans-serif; fill: #3a3a3a; }
.brand { font: 500 45px Inter, sans-serif; }
.legal { font: 500 26px Inter, sans-serif; fill: #8fb5b1; text-decoration: underline; }
.mapbtn { fill: #0b1016; fill-opacity: .88; }

/* tab bar */
.tabs { flex: none; display: grid; grid-template-columns: repeat(5, 1fr); height: 25rem; padding-right: .4rem; border-top: 1px solid #3b3b39; background: linear-gradient(100deg, #252522 0%, #242424 40%, #222 100%); }
.tab { display: flex; flex-direction: column; align-items: center; font: 500 2.9rem/4rem Inter, sans-serif; letter-spacing: .06rem; color: #7b7b7b; padding-top: 1.4rem; }
.ic { height: 8rem; margin-bottom: 1rem; fill: #878787; color: #878787; }
.star { width: 7.6rem; padding-bottom: .5rem; }
.list { width: 7rem; }
.cal { width: 7rem; }
.map { width: 7rem; }
.gear { width: 7.4rem; }
.tab.on { color: #629de3; }
.tab.on .ic { fill: #629de3; color: #629de3; }
```
